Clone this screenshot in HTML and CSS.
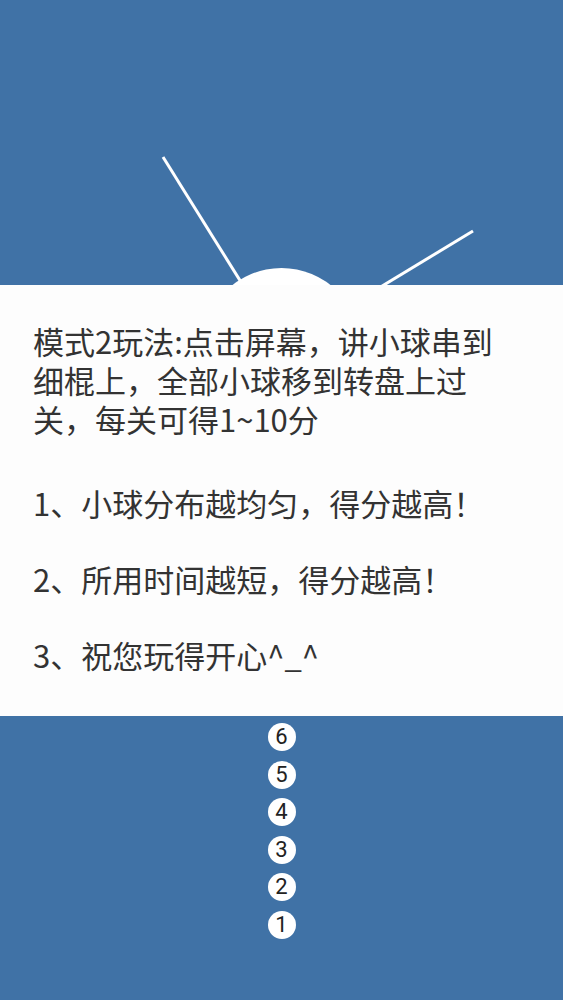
FILE: index.html
```html
<!DOCTYPE html>
<html lang="zh-CN">
<head>
    <meta charset="UTF-8">
    <meta name="viewport" content="width=device-width, initial-scale=1.0">
    <title>模式2玩法</title>
    <link rel="stylesheet" href="styles.css">
</head>
<body>
    <!-- 转盘 -->
    <div class="stage">
        <svg class="wheel" width="563" height="285" viewBox="0 0 563 285">
            <line x1="281.5" y1="347" x2="163" y2="157" />
            <line x1="281.5" y1="347" x2="473" y2="231" />
            <circle cx="281.5" cy="347" r="79" />
        </svg>
    </div>

    <!-- 玩法说明 -->
    <div class="rules">
        <p class="intro">模式2玩法:点击屏幕，讲小球串到<br>细棍上，全部小球移到转盘上过<br>关，每关可得1~10分</p>
        <p class="item first">1、小球分布越均匀，得分越高！</p>
        <p class="item">2、所用时间越短，得分越高！</p>
        <p class="item">3、祝您玩得开心^_^</p>
    </div>

    <!-- 待发射的小球 -->
    <div class="balls">
        <div class="ball">6</div>
        <div class="ball">5</div>
        <div class="ball">4</div>
        <div class="ball">3</div>
        <div class="ball">2</div>
        <div class="ball">1</div>
    </div>
</body>
</html>
```

FILE: styles.css
```css
html, body{
    margin: 0;
    padding: 0;
}
body{
    width: 563px;
    height: 1000px;
    background-color: #4072a6;
    font-family: "Noto Sans CJK SC", "Noto Sans", sans-serif;
    overflow: hidden;
}
.stage{
    height: 285px;
}
.wheel{
    display: block;
}
.wheel line{
    stroke: #fff;
    stroke-width: 3;
}
.wheel circle{
    fill: #fff;
}
.rules{
    background-color: #fdfdfd;
    padding: 36px 0 42px 33px;
    color: #333;
    font-size: 31px;
    line-height: 39px;
}
.rules p{
    margin: 0;
}
.item{
    margin-top: 37px !important;
}
.item.first{
    margin-top: 45px !important;
}
.balls{
    display: flex;
    flex-direction: column;
    align-items: center;
    gap: 9.5px;
    padding-top: 7px;
}
.ball{
    width: 28px;
    height: 28px;
    border-radius: 50%;
    background-color: #fff;
    color: #222;
    font-family: Roboto, "Noto Sans", sans-serif;
    font-size: 22px;
    line-height: 28px;
    text-align: center;
}
```
